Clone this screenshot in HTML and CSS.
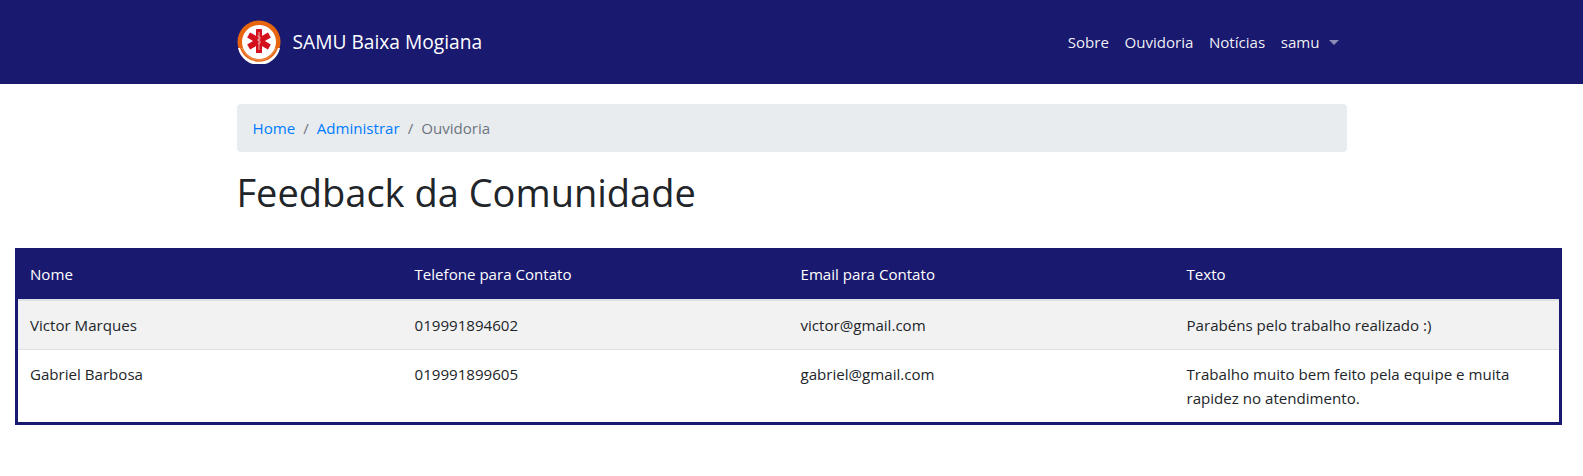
FILE: index.html
```html
<!DOCTYPE html>
<html lang="pt-BR">
<head>
<meta charset="utf-8">
<title>Feedback da Comunidade</title>
<link rel="stylesheet" href="styles.css">
</head>
<body>
<nav class="navbar">
  <div class="container nav-inner">
    <a class="brand" href="#">
      <svg class="logo" width="44" height="44" viewBox="0 0 44 44">
        <circle cx="22" cy="22" r="21.5" fill="#e8650f"/>
        <circle cx="22" cy="22" r="17" fill="#fff"/>
        <path d="M3 28 A20 20 0 0 0 41 28 L43 28 A21.5 21.5 0 0 1 1 28 Z" fill="#fff"/>
        <path d="M5 28 A18 18 0 0 0 39 28" fill="none" stroke="#ef9a5c" stroke-width="1"/>
        <g fill="#d3101c">
          <rect x="19" y="9" width="6" height="24" rx="0.5"/>
          <rect x="19" y="9" width="6" height="24" rx="0.5" transform="rotate(60 22 21)"/>
          <rect x="19" y="9" width="6" height="24" rx="0.5" transform="rotate(120 22 21)"/>
        </g>
        <path d="M22 12 V30 M20.5 16 C24 17 24 19 20.5 20 C24 21 24 23 21 24" fill="none" stroke="#f4c9c9" stroke-width="0.8"/>
      </svg>
      <span>SAMU Baixa Mogiana</span>
    </a>
    <ul class="nav-links">
      <li><a href="#">Sobre</a></li>
      <li><a href="#">Ouvidoria</a></li>
      <li><a href="#">Notícias</a></li>
      <li><a href="#" class="dropdown">samu</a></li>
    </ul>
  </div>
</nav>
<main>
  <div class="container">
    <ol class="breadcrumb">
      <li><a href="#">Home</a></li>
      <li><a href="#">Administrar</a></li>
      <li class="active">Ouvidoria</li>
    </ol>
    <h1>Feedback da Comunidade</h1>
  </div>
  <div class="table-wrap">
    <table class="feedback">
      <thead>
        <tr><th>Nome</th><th>Telefone para Contato</th><th>Email para Contato</th><th>Texto</th></tr>
      </thead>
      <tbody>
        <tr class="odd"><td>Victor Marques</td><td>019991894602</td><td>victor@gmail.com</td><td>Parabéns pelo trabalho realizado :)</td></tr>
        <tr><td>Gabriel Barbosa</td><td>019991899605</td><td>gabriel@gmail.com</td><td>Trabalho muito bem feito pela equipe e muita rapidez no atendimento.</td></tr>
      </tbody>
    </table>
  </div>
</main>
</body>
</html>
```
FILE: styles.css
```css
* { box-sizing: border-box; }
body {
  margin: 0;
  font-family: "Open Sans", "Noto Sans", sans-serif;
  font-size: 15.1px;
  line-height: 24px;
  color: #212529;
  background: #fff;
}
a { text-decoration: none; }
.container { width: 1110px; margin: 0 auto; }
.navbar { background: #191970; height: 84px; display: flex; align-items: center; }
.nav-inner { display: flex; align-items: center; justify-content: space-between; }
.brand { display: flex; align-items: center; gap: 12px; color: #fff; font-size: 19.2px; }
.logo { display: block; }
.nav-links { display: flex; list-style: none; margin: 0; padding: 0 8px 0 0; gap: 15.5px; }
.nav-links a { color: rgba(255,255,255,.95); font-size: 15.1px; }
.dropdown { display: flex; align-items: center; }
.dropdown::after {
  content: "";
  margin-left: 9px;
  border-top: 5px solid rgba(255,255,255,.5);
  border-left: 5px solid transparent;
  border-right: 5px solid transparent;
}
.breadcrumb {
  display: flex;
  list-style: none;
  margin: 20px 0 0;
  padding: 12px 16px;
  height: 48px;
  background: #e9ecef;
  border-radius: 4px;
}
.breadcrumb a { color: #007bff; }
.breadcrumb li + li::before { content: "/"; color: #6c757d; padding: 0 8px; }
.breadcrumb .active { color: #6c757d; }
h1 { margin: 16px 0 32px; font-size: 38px; font-weight: 400; line-height: 48px; }
.table-wrap { padding: 0 21px 0 15px; }
.feedback {
  width: 100%;
  table-layout: fixed;
  border-collapse: collapse;
  border: 3px solid #191970;
}
.feedback th, .feedback td { padding: 12px; text-align: left; vertical-align: top; }
.feedback th { background: #191970; color: #fff; font-weight: 400; border-bottom: 2px solid #dee2e6; height: 50px; padding-top: 11px; }
.feedback td { border-top: 1px solid #dee2e6; }
.feedback tr.odd td { background: #f2f2f2; border-top: 0; }
```
